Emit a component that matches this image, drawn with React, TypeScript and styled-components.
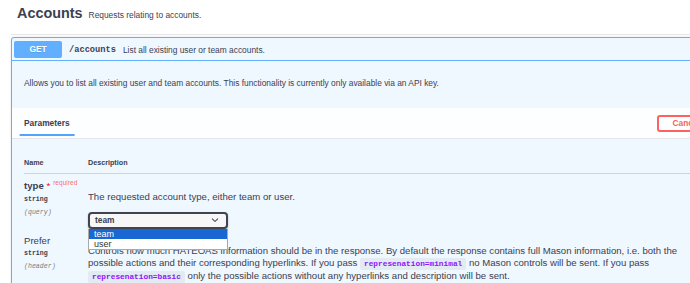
import styled, { createGlobalStyle } from 'styled-components';

const GlobalStyle = createGlobalStyle`
  html, body {
    margin: 0;
    padding: 0;
    background: #fff;
    overflow: hidden;
  }
  body {
    font-family: "Liberation Sans", Arial, sans-serif;
    color: #3b4151;
  }
  * {
    box-sizing: border-box;
  }
`;

const App: React.FC = () => {
  return (
    <>
      <GlobalStyle />
      <Page>
        <TagHeading>
          <TagTitle>Accounts</TagTitle>
          <TagNote>Requests relating to accounts.</TagNote>
        </TagHeading>

        <Opblock>
          <Summary>
            <Method>GET</Method>
            <Path>/accounts</Path>
            <SummaryText>List all existing user or team accounts.</SummaryText>
          </Summary>

          <Intro>
            Allows you to list all existing user and team accounts. This functionality is currently
            only available via an API key.
          </Intro>

          <SectionHeader>
            <Tab>Parameters</Tab>
            <CancelButton>Cancel</CancelButton>
          </SectionHeader>

          <TableWrap>
            <Row>
              <HeadCell>Name</HeadCell>
              <HeadCell>Description</HeadCell>
            </Row>

            <ParamRow>
              <NameCell>
                <ParamName $required>
                  type<Star>&nbsp;*</Star>
                  <Required>required</Required>
                </ParamName>
                <ParamType>string</ParamType>
                <ParamIn>(query)</ParamIn>
              </NameCell>
              <DescCell>
                <Markdown>The requested account type, either team or user.</Markdown>
                <SelectWrap>
                  <FakeSelect>
                    team
                    <Chevron viewBox="0 0 20 20">
                      <path d="M13.418 7.859a.695.695 0 01.978 0 .68.68 0 010 .969l-3.908 3.83a.697.697 0 01-.979 0l-3.908-3.83a.68.68 0 010-.969.695.695 0 01.978 0L10 11z" />
                    </Chevron>
                  </FakeSelect>
                  <OptionList>
                    <Option $active>team</Option>
                    <Option>user</Option>
                  </OptionList>
                </SelectWrap>
              </DescCell>
            </ParamRow>

            <ParamRow>
              <NameCell>
                <ParamName>Prefer</ParamName>
                <ParamType>string</ParamType>
                <ParamIn>(header)</ParamIn>
              </NameCell>
              <DescCell>
                <Markdown>
                  Controls how much HATEOAS information should be in the response. By default the
                  response contains full Mason information, i.e. both the possible actions and their
                  corresponding hyperlinks. If you pass <Code>represenation=minimal</Code> no Mason
                  controls will be sent. If you pass <Code>represenation=basic</Code> only the
                  possible actions without any hyperlinks and description will be sent.
                </Markdown>
              </DescCell>
            </ParamRow>
          </TableWrap>
        </Opblock>
      </Page>
    </>
  );
};

const Page = styled.div`
  width: 729px;
  padding-left: 11px;
`;

const TagHeading = styled.div`
  display: flex;
  align-items: center;
  height: 35px;
  padding: 0 0 7px 6px;
  margin-bottom: 2px;
  border-bottom: 1px solid #e6e6ea;
`;

const TagTitle = styled.span`
  font-size: 14.4px;
  font-weight: bold;
  line-height: 17px;
`;

const TagNote = styled.small`
  font-size: 8.4px;
  padding: 2px 6px 0;
`;

const Opblock = styled.div`
  border: 1px solid #61affe;
  border-radius: 3px;
  background: #eff7ff;
  box-shadow: 0 0 2px rgba(0, 0, 0, 0.15);
`;

const Summary = styled.div`
  display: flex;
  align-items: center;
  padding: 3px 3px 2px 2px;
  border-bottom: 1px solid #61affe;
`;

const Method = styled.span`
  min-width: 48px;
  height: 17px;
  line-height: 17px;
  text-align: center;
  background: #61affe;
  color: #fff;
  font-size: 8.4px;
  font-weight: bold;
  border-radius: 2px;
  text-shadow: 0 1px 0 rgba(0, 0, 0, 0.1);
`;

const Path = styled.span`
  margin-left: 7px;
  font-family: "Liberation Mono", "DejaVu Sans Mono", monospace;
  font-size: 8.7px;
  font-weight: bold;
`;

const SummaryText = styled.span`
  margin-left: 7px;
  font-size: 8.4px;
`;

const Intro = styled.p`
  margin: 0;
  padding: 16px 12px 19px;
  font-size: 8.4px;
  line-height: 12px;
`;

const SectionHeader = styled.div`
  display: flex;
  align-items: center;
  height: 31px;
  padding: 0 12px;
  background: rgba(255, 255, 255, 0.8);
  border-bottom: 1px solid #e3e7ed;
`;

const Tab = styled.h4`
  position: relative;
  margin: 0;
  font-size: 8.4px;
  line-height: 10px;
  font-weight: bold;

  &::after {
    content: '';
    position: absolute;
    left: 50%;
    bottom: -8px;
    width: 120%;
    height: 2.4px;
    transform: translateX(-50%);
    background: #55a5f6;
  }
`;

const CancelButton = styled.button`
  margin-left: auto;
  height: 17px;
  padding: 0 14px;
  border: 2px solid #ff6060;
  border-radius: 3px;
  background: transparent;
  color: #ff6060;
  font-family: inherit;
  font-size: 8.4px;
  font-weight: bold;
`;

const TableWrap = styled.div`
  padding: 13px 12px 0;
`;

const Row = styled.div`
  display: grid;
  grid-template-columns: 64px 610px;
  border-bottom: 1px solid #cdd3dc;
`;

const HeadCell = styled.div`
  padding: 6px 0;
  font-size: 7.2px;
  line-height: 9px;
  font-weight: bold;
`;

const ParamRow = styled.div`
  display: grid;
  grid-template-columns: 64px 610px;
  padding-top: 6px;
`;

const NameCell = styled.div`
  display: flex;
  flex-direction: column;
`;

const ParamName = styled.div<{ $required?: boolean }>`
  font-size: 9.6px;
  line-height: 12px;
  font-weight: ${(p) => (p.$required ? 'bold' : 'normal')};
  white-space: nowrap;
`;

const Star = styled.span`
  color: red;
  font-weight: normal;
`;

const Required = styled.span`
  position: relative;
  top: -3.6px;
  padding-left: 3px;
  font-size: 6.6px;
  font-weight: normal;
  color: rgba(255, 0, 0, 0.6);
`;

const ParamType = styled.div`
  font-family: "Liberation Mono", "DejaVu Sans Mono", monospace;
  font-size: 6.6px;
  font-weight: bold;
  line-height: 14px;
`;

const ParamIn = styled.div`
  font-family: "Liberation Mono", "DejaVu Sans Mono", monospace;
  font-size: 6.6px;
  font-style: italic;
  line-height: 12px;
  color: #808080;
`;

const DescCell = styled.div`
  display: flex;
  flex-direction: column;
  align-items: flex-start;
`;

const Markdown = styled.p`
  margin: 10.5px 0 10px;
  font-size: 9.6px;
  line-height: 11.4px;
`;

const Code = styled.code`
  padding: 2px 4px;
  border-radius: 2px;
  background: rgba(0, 0, 0, 0.05);
  color: #9012fe;
  font-family: "Liberation Mono", "DejaVu Sans Mono", monospace;
  font-size: 7.8px;
  font-weight: bold;
`;

const SelectWrap = styled.div`
  position: relative;
`;

const FakeSelect = styled.div`
  position: relative;
  width: 140px;
  height: 17px;
  padding-left: 5px;
  border: 2px solid #41444e;
  border-radius: 4px;
  background: #f7f7f7;
  box-shadow: 0 1px 2px rgba(0, 0, 0, 0.25);
  font-size: 8.4px;
  font-weight: bold;
  line-height: 13px;
`;

const Chevron = styled.svg`
  position: absolute;
  right: 4px;
  top: 50%;
  width: 14px;
  height: 14px;
  transform: translateY(-50%);
  fill: #3b4151;
`;

const OptionList = styled.div`
  position: absolute;
  top: 17px;
  left: 0;
  z-index: 2;
  width: 140px;
  background: #fff;
  border: 1px solid #a9a9a9;
  border-top: none;
`;

const Option = styled.div<{ $active?: boolean }>`
  height: 10px;
  padding-left: 5px;
  font-size: 9px;
  line-height: 10px;
  background: ${(p) => (p.$active ? '#1967d2' : '#fff')};
  color: ${(p) => (p.$active ? '#fff' : '#333')};
`;

export default App;
